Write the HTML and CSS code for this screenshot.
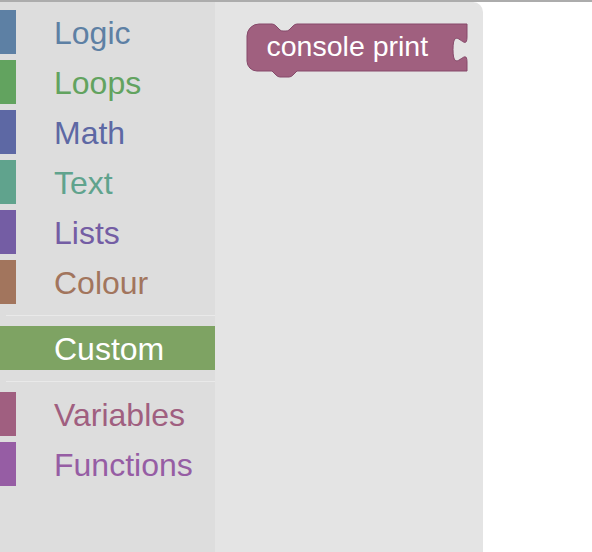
FILE: index.html
```html
<!DOCTYPE html>
<html>
<head>
<meta charset="utf-8">
<link rel="stylesheet" href="styles.css">
</head>
<body>
<div class="app">
  <div class="toolbox">
    <div class="row"><div class="inner"><span class="bar logic"></span><span class="label t-logic">Logic</span></div></div>
    <div class="row"><div class="inner"><span class="bar loops"></span><span class="label t-loops">Loops</span></div></div>
    <div class="row"><div class="inner"><span class="bar math"></span><span class="label t-math">Math</span></div></div>
    <div class="row"><div class="inner"><span class="bar text"></span><span class="label t-text">Text</span></div></div>
    <div class="row"><div class="inner"><span class="bar lists"></span><span class="label t-lists">Lists</span></div></div>
    <div class="row"><div class="inner"><span class="bar colour"></span><span class="label t-colour">Colour</span></div></div>
    <div class="sep"></div>
    <div class="row"><div class="inner selected"><span class="bar custom"></span><span class="label t-sel">Custom</span></div></div>
    <div class="sep"></div>
    <div class="row"><div class="inner"><span class="bar variables"></span><span class="label t-variables">Variables</span></div></div>
    <div class="row"><div class="inner"><span class="bar functions"></span><span class="label t-functions">Functions</span></div></div>
  </div>
  <div class="flyout">
    <svg class="block" width="268" height="100" viewBox="215 2 268 100">
      <path class="block-body" d="M247,36 A12,12 0 0 1 259,24 H272 Q274,24 276,26 L280,30 Q281,31 283,31 H286 Q288,31 289,30 L293,26 Q295,24 297,24 H467 V37 c0,17 -14,-14 -14,12.5 s14,-4 14,12.5 V71 H297 L293,75 Q291,77 289,77 H280 Q278,77 276,75 L272,71 H257 A10,10 0 0 1 247,61 Z"/>
      <text class="block-text" x="266.5" y="56">console print</text>
    </svg>
  </div>
  <div class="canvas"></div>
</div>
</body>
</html>
```

FILE: styles.css
```css
html, body {
  margin: 0;
  padding: 0;
  background: #ffffff;
}
.app {
  display: flex;
  width: 592px;
  height: 552px;
  border-top: 2px solid #acacac;
  box-sizing: border-box;
  overflow: hidden;
  font-family: "Liberation Sans", Arial, sans-serif;
}
.toolbox {
  width: 215px;
  flex: none;
  background: #dddddd;
  padding-top: 5px;
  box-sizing: border-box;
}
.row {
  height: 50px;
  padding: 3px 0;
  box-sizing: border-box;
}
.inner {
  height: 44px;
  display: flex;
  align-items: center;
}
.inner.selected {
  background: #7ea363;
}
.bar {
  width: 16px;
  height: 44px;
  flex: none;
}
.label {
  margin-left: 38px;
  font-size: 32px;
  line-height: 44px;
  padding-top: 1px;
  white-space: nowrap;
}
.sep {
  margin: 8px 0 7px 6px;
  height: 1px;
  background: #e9e9e9;
}
.logic { background: #5d80a4; }
.loops { background: #62a35f; }
.math { background: #5d68a4; }
.text { background: #60a38d; }
.lists { background: #745da4; }
.colour { background: #a2755d; }
.custom { background: #7ea363; }
.variables { background: #a05f80; }
.functions { background: #965da4; }
.t-logic { color: #5d80a4; }
.t-loops { color: #62a35f; }
.t-math { color: #5d68a4; }
.t-text { color: #60a38d; }
.t-lists { color: #745da4; }
.t-colour { color: #a2755d; }
.t-sel { color: #ffffff; }
.t-variables { color: #a05f80; }
.t-functions { color: #965da4; }
.flyout {
  width: 268px;
  flex: none;
  background: #e4e4e4;
  border-top-right-radius: 10px;
  position: relative;
}
.block {
  position: absolute;
  left: 0;
  top: 0;
}
.block-body {
  fill: #a0607f;
  stroke: #86496a;
  stroke-width: 1;
}
.block-text {
  fill: #ffffff;
  font-family: "Liberation Sans", Arial, sans-serif;
  font-size: 28.5px;
}
.canvas {
  flex: 1;
  background: #ffffff;
}
```
